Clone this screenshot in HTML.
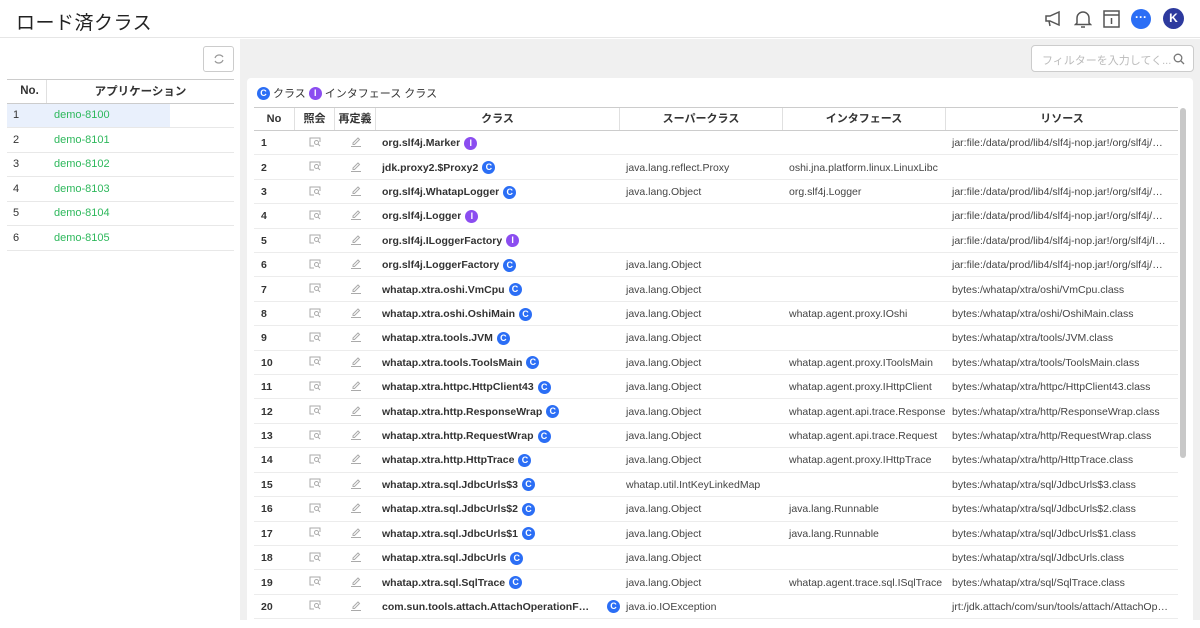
<!DOCTYPE html>
<html><head><meta charset="utf-8"><style>
*{box-sizing:border-box;margin:0;padding:0}
body{width:1200px;height:620px;overflow:hidden;background:#fff;font-family:"Liberation Sans","Noto Sans CJK JP",sans-serif;color:#333;position:relative}
.hdr{position:absolute;left:0;top:0;width:1200px;height:38px;border-bottom:1px solid #e6e6e6;background:#fff}
.hdr h1{position:absolute;left:16px;top:8px;font-size:19px;font-weight:400;color:#222;letter-spacing:0.5px}
.left{position:absolute;left:0;top:39px;width:240px;height:581px;background:#fff}
.right{position:absolute;left:240px;top:39px;width:960px;height:581px;background:#f0f0f0}
.btn{position:absolute;left:203px;top:46px;width:31px;height:26px;border:1px solid #ccc;border-radius:3px;background:#fff}
.lt{position:absolute;left:7px;top:79px;width:227px;font-size:11px}
.lt .r{display:flex;height:24.5px;align-items:center;border-bottom:1px solid #e8e8e8}
.lt .h{border-top:1px solid #ccc;border-bottom:1.5px solid #ccc;font-weight:bold;color:#333;font-size:11.5px}
.lt .c1{width:40px;padding-left:6px}
.lt .h .c1{text-align:center;border-right:1px solid #e0e0e0;height:100%;line-height:23px}
.lt .h .c2{flex:1;text-align:center}
.lt .c2{padding-left:7px;color:#2eb85c}
.sel{background:linear-gradient(to right,#e9f0fc 163px,#fff 163px)}
.flt{position:absolute;left:1031px;top:45px;width:163px;height:27px;border:1px solid #ccc;border-radius:4px;background:#fff;font-size:11px;color:#bbb;padding:6px 0 0 10px}
.card{position:absolute;left:247px;top:78px;width:946px;height:550px;background:#fff;border-radius:4px}
.leg{position:absolute;left:257px;top:85px;font-size:11px;display:flex;align-items:center;gap:3px;color:#333}
.b{display:inline-block;width:13px;height:13px;border-radius:50%;color:#fff;font-size:9px;font-weight:bold;text-align:center;line-height:13px;vertical-align:middle;flex:none}
.bc{background:#2b6ef5}.bi{background:#8b4df0}
.tb{position:absolute;left:254px;top:107px;width:924px;font-size:10.5px}
.tr{display:flex;height:24.42px;align-items:center;border-bottom:1px solid #ececec;padding-top:1px}
.th{height:24px;border-top:1px solid #ccc;border-bottom:1.5px solid #ccc;font-weight:bold;font-size:11px;padding-top:0}
.th>div{border-right:1px solid #e0e0e0;height:100%;line-height:22px;text-align:center}
.th>div:last-child{border-right:none}
.a{width:41px;padding-left:7px;font-weight:bold}.th .a{padding:0}
.q{width:40px;text-align:center}.e{width:41px;text-align:center}
.n{width:244px;padding-left:6px;font-weight:bold;white-space:nowrap;display:flex;align-items:center;gap:4px}
.n span.t{overflow:hidden;text-overflow:ellipsis;white-space:nowrap;max-width:212px}
.s{width:163px;padding-left:6px;color:#444;white-space:nowrap;overflow:hidden}.i{width:163px;padding-left:6px;color:#444;white-space:nowrap;overflow:hidden}
.rs{flex:1;padding-left:6px;padding-right:10px;color:#444;white-space:nowrap;overflow:hidden;text-overflow:ellipsis}
.sb{position:absolute;left:1180px;top:108px;width:6px;height:350px;background:#c8c8c8;border-radius:3px}
</style></head><body>
<div class="hdr"><h1>ロード済クラス</h1>
<svg style="position:absolute;left:1044px;top:10px" width="18" height="18" viewBox="0 0 18 18" fill="none" stroke="#555" stroke-width="1.5"><path d="M2 6h4l9-4v13l-9-4H2z"/><path d="M5 11l1 5"/></svg>
<svg style="position:absolute;left:1074px;top:9px" width="18" height="20" viewBox="0 0 18 20" fill="none" stroke="#555" stroke-width="1.5"><path d="M3 14V9a6 6 0 0112 0v5l1.5 1.5h-15z"/><path d="M7 18h4"/></svg>
<svg style="position:absolute;left:1103px;top:10px" width="17" height="18" viewBox="0 0 17 18" fill="none" stroke="#555" stroke-width="1.5"><rect x="1" y="1" width="15" height="16"/><path d="M1 5h15M8.5 8v6"/></svg>
<div style="position:absolute;left:1131px;top:9px;width:20px;height:20px;border-radius:50%;background:#2b6ef5;color:#fff;font-size:12px;text-align:center;line-height:16px;font-weight:bold">···</div>
<div style="position:absolute;left:1163px;top:8px;width:21px;height:21px;border-radius:50%;background:#2d3a9e;color:#fff;font-size:12px;text-align:center;line-height:21px;font-weight:bold">K</div>
</div>
<div class="left"></div>
<div class="right"></div>
<div class="btn"><svg style="position:absolute;left:9px;top:6px" width="12" height="12" viewBox="0 0 12 12" fill="none" stroke="#999" stroke-width="1.2"><path d="M10 4A4.5 4.5 0 002 5M2 8a4.5 4.5 0 008-1"/></svg></div>
<div class="lt">
<div class="r h"><div class="c1">No.</div><div class="c2" style="color:#333;padding:0">アプリケーション</div></div>
<div class="r sel"><div class="c1">1</div><div class="c2">demo-8100</div></div>
<div class="r"><div class="c1">2</div><div class="c2">demo-8101</div></div>
<div class="r"><div class="c1">3</div><div class="c2">demo-8102</div></div>
<div class="r"><div class="c1">4</div><div class="c2">demo-8103</div></div>
<div class="r"><div class="c1">5</div><div class="c2">demo-8104</div></div>
<div class="r"><div class="c1">6</div><div class="c2">demo-8105</div></div>
</div>
<div class="flt">フィルターを入力してく...<svg style="position:absolute;left:141px;top:7px" width="12" height="12" viewBox="0 0 12 12" fill="none" stroke="#777" stroke-width="1.3"><circle cx="5" cy="5" r="3.8"/><path d="M8 8l3 3"/></svg></div>
<div class="card"></div>
<div class="leg"><span class="b bc">C</span>クラス <span class="b bi">I</span>インタフェース クラス</div>
<div class="tb" id="tb">
<div class="tr th"><div class="a">No</div><div class="q">照会</div><div class="e">再定義</div><div class="n" style="padding:0;display:block">クラス</div><div class="s" style="padding:0;color:#333">スーパークラス</div><div class="i" style="padding:0;color:#333">インタフェース</div><div class="rs" style="padding:0;color:#333">リソース</div></div>
</div>
<div class="sb"></div>
<script>
var d=[["org.slf4j.Marker","I","","","jar:file:/data/prod/lib4/slf4j-nop.jar!/org/slf4j/M..."],
["jdk.proxy2.$Proxy2","C","java.lang.reflect.Proxy","oshi.jna.platform.linux.LinuxLibc",""],
["org.slf4j.WhatapLogger","C","java.lang.Object","org.slf4j.Logger","jar:file:/data/prod/lib4/slf4j-nop.jar!/org/slf4j/W..."],
["org.slf4j.Logger","I","","","jar:file:/data/prod/lib4/slf4j-nop.jar!/org/slf4j/Lo..."],
["org.slf4j.ILoggerFactory","I","","","jar:file:/data/prod/lib4/slf4j-nop.jar!/org/slf4j/ILo..."],
["org.slf4j.LoggerFactory","C","java.lang.Object","","jar:file:/data/prod/lib4/slf4j-nop.jar!/org/slf4j/Lo..."],
["whatap.xtra.oshi.VmCpu","C","java.lang.Object","","bytes:/whatap/xtra/oshi/VmCpu.class"],
["whatap.xtra.oshi.OshiMain","C","java.lang.Object","whatap.agent.proxy.IOshi","bytes:/whatap/xtra/oshi/OshiMain.class"],
["whatap.xtra.tools.JVM","C","java.lang.Object","","bytes:/whatap/xtra/tools/JVM.class"],
["whatap.xtra.tools.ToolsMain","C","java.lang.Object","whatap.agent.proxy.IToolsMain","bytes:/whatap/xtra/tools/ToolsMain.class"],
["whatap.xtra.httpc.HttpClient43","C","java.lang.Object","whatap.agent.proxy.IHttpClient","bytes:/whatap/xtra/httpc/HttpClient43.class"],
["whatap.xtra.http.ResponseWrap","C","java.lang.Object","whatap.agent.api.trace.Response","bytes:/whatap/xtra/http/ResponseWrap.class"],
["whatap.xtra.http.RequestWrap","C","java.lang.Object","whatap.agent.api.trace.Request","bytes:/whatap/xtra/http/RequestWrap.class"],
["whatap.xtra.http.HttpTrace","C","java.lang.Object","whatap.agent.proxy.IHttpTrace","bytes:/whatap/xtra/http/HttpTrace.class"],
["whatap.xtra.sql.JdbcUrls$3","C","whatap.util.IntKeyLinkedMap","","bytes:/whatap/xtra/sql/JdbcUrls$3.class"],
["whatap.xtra.sql.JdbcUrls$2","C","java.lang.Object","java.lang.Runnable","bytes:/whatap/xtra/sql/JdbcUrls$2.class"],
["whatap.xtra.sql.JdbcUrls$1","C","java.lang.Object","java.lang.Runnable","bytes:/whatap/xtra/sql/JdbcUrls$1.class"],
["whatap.xtra.sql.JdbcUrls","C","java.lang.Object","","bytes:/whatap/xtra/sql/JdbcUrls.class"],
["whatap.xtra.sql.SqlTrace","C","java.lang.Object","whatap.agent.trace.sql.ISqlTrace","bytes:/whatap/xtra/sql/SqlTrace.class"],
["com.sun.tools.attach.AttachOperationFailedException","C","java.io.IOException","","jrt:/jdk.attach/com/sun/tools/attach/AttachOperationFailedException.class"]];
var h="";
var q='<svg width="12" height="10" viewBox="0 0 12 10" fill="none" stroke="#aaa" stroke-width="1"><path d="M5 9H1V1h10v4"/><circle cx="7.5" cy="5.5" r="2"/><path d="M9 7l2 2"/></svg>';
var e='<svg width="12" height="11" viewBox="0 0 12 11" fill="none" stroke="#aaa" stroke-width="1"><path d="M3 7l5-5 1.5 1.5-5 5H3zM1 10.5h10"/></svg>';
d.forEach(function(r,k){var bd=r[1]=="C"?'<span class="b bc">C</span>':'<span class="b bi">I</span>';
var nm='<span class="t">'+r[0]+'</span>'+(k==19?'<span style="width:5px"></span>':'')+bd;
h+='<div class="tr"><div class="a">'+(k+1)+'</div><div class="q">'+q+'</div><div class="e">'+e+'</div><div class="n">'+nm+'</div><div class="s">'+r[2]+'</div><div class="i">'+r[3]+'</div><div class="rs">'+r[4]+'</div></div>';});
document.getElementById("tb").insertAdjacentHTML("beforeend",h);
</script>
</body></html>
